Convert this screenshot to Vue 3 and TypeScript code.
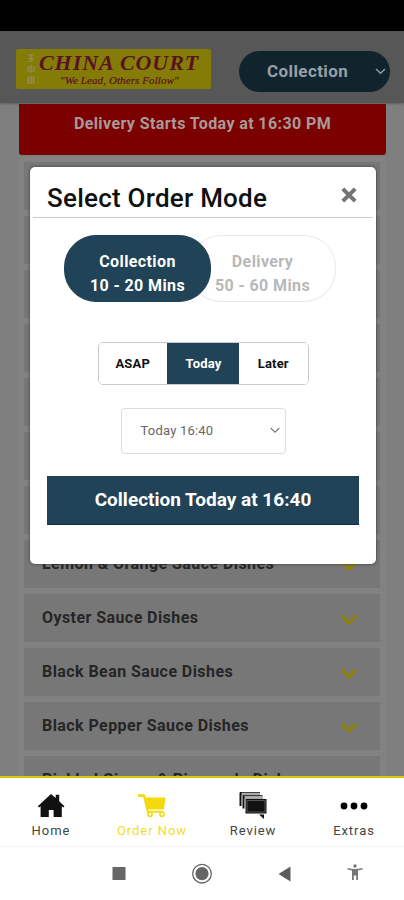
<script setup lang="ts">
import { ref } from 'vue'

const categories: string[] = [
  'Lemon & Orange Sauce Dishes',
  'Oyster Sauce Dishes',
  'Black Bean Sauce Dishes',
  'Black Pepper Sauce Dishes',
  'Pickled Ginger & Pineapple Dishes',
]
const times: string[] = ['ASAP', 'Today', 'Later']
const selectedTime = ref<string>('Today')
const mode = ref<'collection' | 'delivery'>('collection')
</script>

<template>
  <div class="phone">
    <div class="status"></div>
    <header class="header">
      <div class="logo">
        <svg class="seal" width="10" height="33" viewBox="0 0 10 33">
          <path d="M2 2h6M5 1v7M2 5.500h6M2 8.500l6-1M5 12v8M2 14h6v4H2zM2 24h6v6H2zM5 23v7M2 27h6" />
        </svg>
        <div class="brand">
          <div class="brand-name">CHINA COURT</div>
          <div class="brand-tag">"We Lead, Others Follow"</div>
        </div>
      </div>
      <button class="order-pill">
        <span>Collection</span>
        <svg class="pill-arrow" width="11" height="7" viewBox="0 0 11 7"><path d="M1 1l4.500 4.300L10 1" /></svg>
      </button>
    </header>

    <main class="content">
      <div class="banner">Delivery Starts Today at 16:30 PM</div>
      <div class="menu">
        <div v-for="n in 7" :key="n" class="row"></div>
        <div v-for="c in categories" :key="c" class="row">
          <span>{{ c }}</span>
          <svg width="18" height="12" viewBox="0 0 18 12"><path d="M1.800 1.800l7.200 7 7.200-7" /></svg>
        </div>
      </div>
    </main>

    <section class="modal">
      <div class="modal-head">
        <h1>Select Order Mode</h1>
        <svg width="16" height="16" viewBox="0 0 16 16"><path d="M1.800 1.800l12.400 12.400M14.200 1.800L1.800 14.200" /></svg>
      </div>
      <div class="modes">
        <button :class="['mode', { on: mode === 'collection' }]" @click="mode = 'collection'">
          <span>Collection</span><span>10 - 20 Mins</span>
        </button>
        <button :class="['mode', 'second', { on: mode === 'delivery' }]" @click="mode = 'delivery'">
          <span>Delivery</span><span>50 - 60 Mins</span>
        </button>
      </div>
      <div class="times">
        <button v-for="t in times" :key="t" :class="{ on: selectedTime === t }" @click="selectedTime = t">{{ t }}</button>
      </div>
      <div class="select">
        <span>Today 16:40</span>
        <svg width="10" height="7" viewBox="0 0 10 7"><path d="M.7 1L5 5.200 9.300 1" /></svg>
      </div>
      <button class="confirm">Collection Today at 16:40</button>
    </section>

    <nav class="tabs">
      <div class="tab">
        <svg width="28" height="26" viewBox="0 0 28 26">
          <path fill="#111" d="M14 1L.8 13.300l1.300 1.300L3.600 13.200V24h8.200v-7h4.800v7h8.200V13.200l1.400 1.400 1.300-1.300-5.300-5V1.700h-3.500V5z" />
        </svg>
        <span>Home</span>
      </div>
      <div class="tab active">
        <svg width="28" height="26" viewBox="0 0 28 26">
          <path fill="#f4da0c" d="M0 1.300h6.500L8 4.500h19.500L26 16.500H10.300l.4 1.300h14.500v2H9L5.200 4H0z" />
          <circle cx="12" cy="21.300" r="2.100" fill="#fff" stroke="#f4da0c" stroke-width="1.600" />
          <circle cx="24" cy="21.300" r="2.100" fill="#fff" stroke="#f4da0c" stroke-width="1.600" />
        </svg>
        <span>Order Now</span>
      </div>
      <div class="tab">
        <svg width="28" height="28" viewBox="0 0 28 28">
          <path fill="#aaa" d="M1 .5h20v3H1zM4 3.500h20V7H4z" />
          <path fill="#111" d="M.5.500h2v13.500h-2zM3.500 3.500h2v13h-2zM1 0h20v.8H1zM3.500 3.200h20v.8h-20zM6.500 7H27.500v14.500H6.500zM20 22.500h5V27z" />
          <path fill="none" stroke="#666" stroke-width=".8" d="M8 8.500H26V20H8z" />
        </svg>
        <span>Review</span>
      </div>
      <div class="tab">
        <svg width="28" height="26" viewBox="0 0 28 26">
          <circle cx="4" cy="13" r="3.400" /><circle cx="14" cy="13" r="3.400" /><circle cx="24" cy="13" r="3.400" />
        </svg>
        <span>Extras</span>
      </div>
    </nav>

    <footer class="system">
      <svg width="22" height="22" viewBox="0 0 22 22"><rect x="4.500" y="4" width="13" height="13" fill="#666" /></svg>
      <svg width="22" height="22" viewBox="0 0 22 22"><circle cx="11" cy="10.700" r="9.300" fill="#fff" stroke="#666" stroke-width="1.300" /><circle cx="11" cy="10.700" r="6.600" fill="#666" /></svg>
      <svg width="22" height="22" viewBox="0 0 22 22"><path d="M4.500 11l12-7.500v15z" fill="#5c5c5c" /></svg>
      <svg width="22" height="22" viewBox="0 0 22 22"><circle cx="11" cy="3" r="1.700" fill="#777" /><path d="M3.500 5c5 1.200 10 1.200 15 0v1.600c-1.500.5-3 .7-4.500.9V17h-1.800v-4.500H9.800V17H8V7.500c-1.500-.2-3-.4-4.500-.9z" fill="#777" /></svg>
    </footer>
  </div>
</template>

<style>
body { margin: 0; background: #fff; }
</style>

<style scoped>
* { box-sizing: border-box; }
.phone { position: relative; width: 404px; height: 900px; overflow: hidden; display: flex; flex-direction: column; background: #7f7f7f; font-family: Roboto, "Liberation Sans", sans-serif; }
button { font-family: inherit; margin: 0; padding: 0; border: 0; }
.status { height: 31px; flex: none; background: #000; }
.header { height: 72px; flex: none; background: #575757; display: flex; align-items: flex-start; padding: 18px 14px 0 16px; justify-content: space-between; box-shadow: 0 1px 2px rgba(0,0,0,.25); }
.logo { width: 195px; height: 40px; background: #857b07; border-radius: 2px; display: flex; padding: 3px 0 0 10px; }
.seal { flex: none; margin-top: 1px; fill: none; stroke: #96936f; stroke-width: 1.2; opacity: .8; }
.brand { color: #591321; font-family: "Liberation Serif", serif; font-style: italic; font-weight: bold; white-space: nowrap; }
.brand-name { font-size: 22px; line-height: 22px; margin-left: 3px; letter-spacing: .95px; }
.brand-tag { font-size: 11px; line-height: 12px; margin-left: 24px; font-weight: normal; letter-spacing: .1px; -webkit-text-stroke: .2px #591321; }
.order-pill { width: 151px; height: 41px; margin-top: 2px; border-radius: 21px; background: #10242e; color: #999fa5; font-weight: 700; font-size: 17px; letter-spacing: .4px; display: flex; align-items: center; justify-content: space-between; padding: 0 4px 1px 28px; }
.pill-arrow { fill: none; stroke: #929a9f; stroke-width: 1.5; }
.content { flex: 1; min-height: 0; overflow: hidden; padding: 1px 18px 0 19px; display: flex; flex-direction: column; }
.banner { height: 51px; flex: none; background: #7b0000; color: #a99; border-radius: 0 0 3px 3px; text-align: center; font-weight: 700; font-size: 16px; line-height: 39px; letter-spacing: .4px; }
.menu { margin-top: 2px; background: #828282; padding: 5px 6px 0 5px; display: flex; flex-direction: column; gap: 6px; }
.row { height: 48px; flex: none; background: #777; display: flex; align-items: center; justify-content: space-between; padding: 0 22px 1px 18px; color: #252525; font-weight: 700; font-size: 16px; letter-spacing: .43px; white-space: nowrap; }
.row svg { flex: none; margin-top: 5px; overflow: visible; fill: none; stroke: #8d8306; stroke-width: 3.2; }
.modal { position: absolute; left: 30px; top: 167px; width: 346px; height: 397px; background: #fff; border-radius: 5px; box-shadow: 0 0 3px #333; display: flex; flex-direction: column; align-items: center; }
.modal-head { width: 340px; height: 50px; margin-top: 1px; border-bottom: 1px solid #ccc; display: flex; justify-content: space-between; padding: 12px 16px 0 14px; flex: none; }
h1 { margin: 0; font-size: 26px; line-height: 37px; font-weight: 500; letter-spacing: .24px; color: #101010; white-space: nowrap; }
.modal-head svg { margin-top: 7px; fill: none; stroke: #747474; stroke-width: 4; }
.modes { display: flex; width: 272px; margin-top: 17px; margin-right: 6px; }
.mode { width: 147px; height: 67px; flex: none; border-radius: 32px; background: #fff; border: 1px solid #e5e8e8; color: #b8b8b8; display: flex; flex-direction: column; align-items: center; font-weight: 700; font-size: 16px; line-height: 24px; padding-top: 14px; letter-spacing: .4px; }
.mode.second { margin-left: -22px; }
.mode.on { position: relative; z-index: 1; background: #204357; border-color: #204357; color: #fff; }
.times { display: flex; width: 211px; height: 43px; margin-top: 40px; border: 1px solid #c4cbcf; border-radius: 5px; overflow: hidden; flex: none; }
.times button { flex: 1; background: #fff; font-size: 13px; font-weight: 700; color: #111; letter-spacing: .2px; }
.times .on { background: #204357; color: #fff; flex: none; width: 72px; padding-left: 1px; }
.select { width: 165px; height: 46px; margin-top: 23px; border: 1px solid #ddd; border-radius: 4px; display: flex; align-items: center; justify-content: space-between; padding: 0 5px 1px 19px; color: #666; font-size: 13px; letter-spacing: .2px; flex: none; }
.select svg { fill: none; stroke: #777; stroke-width: 1.1; }
.confirm { width: 312px; height: 49px; margin-top: 22px; background: #204357; border-bottom: 1px solid #132a4b; color: #fff; font-size: 19px; font-weight: 700; letter-spacing: 0; padding-bottom: 1px; flex: none; }
.tabs { height: 71px; flex: none; background: #fff; border-top: 2px solid #d8c70c; border-bottom: 1px solid #f3f3f3; display: grid; grid-template-columns: repeat(4, 1fr); }
.tab { display: flex; flex-direction: column; align-items: center; padding: 14px 0 0 1px; color: #444; font-size: 13px; letter-spacing: .95px; }
.tab svg { height: 28px; flex: none; }
.tab span { line-height: 18px; margin-top: 2px; }
.active { color: #f0dd2a; }
.system { height: 53px; flex: none; background: #fff; display: grid; grid-template-columns: 83px 83px 70px 22px; align-items: center; padding: 1px 0 0 108px; }
</style>
